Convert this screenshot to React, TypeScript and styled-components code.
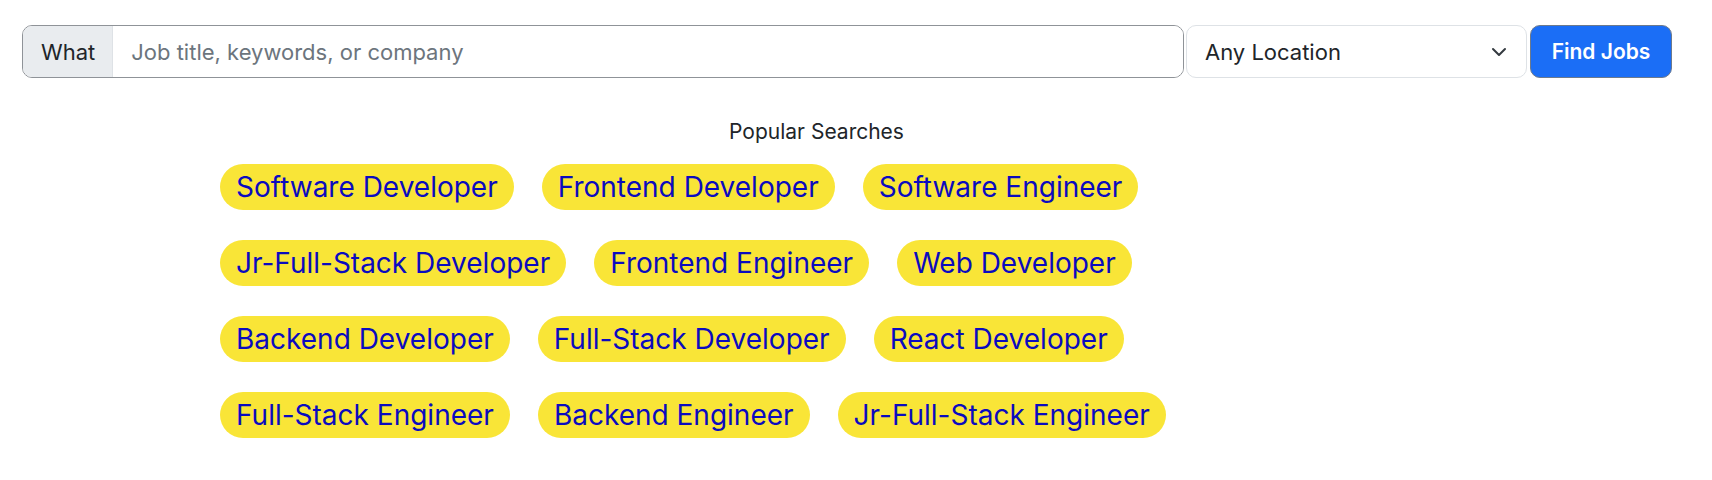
import React from 'react';
import styled, { createGlobalStyle } from 'styled-components';

const GlobalStyle = createGlobalStyle`
  body {
    margin: 0;
    background: #ffffff;
    font-family: Inter, "Liberation Sans", sans-serif;
    color: #212529;
  }
`;

const Page = styled.div`
  padding: 25px 40px 0 22px;
`;

const SearchBar = styled.form`
  display: flex;
  align-items: stretch;
  gap: 2px;
  height: 53px;
`;

const InputGroup = styled.div`
  flex: 1;
  display: flex;
  border: 1px solid #8f9398;
  border-radius: 10px;
  overflow: hidden;
`;

const GroupLabel = styled.span`
  display: flex;
  align-items: center;
  padding: 0 17px 0 18px;
  background: #e9ecef;
  border-right: 1px solid #dee2e6;
  font-size: 22px;
  color: #212529;
`;

const TextInput = styled.input`
  flex: 1;
  border: none;
  outline: none;
  padding: 0 18px;
  font-family: inherit;
  font-size: 22px;
  color: #212529;
  &::placeholder {
    color: #6c757d;
  }
`;

const SelectBox = styled.div`
  width: 341px;
  display: flex;
  align-items: center;
  padding: 0 18px;
  box-sizing: border-box;
  border: 1px solid #dee2e6;
  border-radius: 10px;
  font-size: 22px;
  color: #212529;
`;

const Chevron = styled.svg`
  margin-left: auto;
  margin-right: 1px;
`;

const FindButton = styled.button`
  width: 142px;
  margin-left: 1px;
  border: 1px solid #6d7a8c;
  border-radius: 10px;
  background: #1b6ef6;
  color: #ffffff;
  font-family: inherit;
  font-size: 21px;
  font-weight: 600;
  cursor: pointer;
`;

const Popular = styled.section`
  width: 1193px;
  margin: 38px 0 0 198px;
`;

const Heading = styled.div`
  text-align: center;
  font-size: 21px;
  line-height: 31px;
  color: #212529;
  margin-bottom: 17px;
`;

const ChipList = styled.div`
  display: flex;
  flex-wrap: wrap;
  column-gap: 28px;
  row-gap: 30px;
`;

const Chip = styled.a`
  display: inline-block;
  padding: 6px 16px;
  line-height: 34px;
  font-size: 28px;
  color: #0b0bbf;
  background: #f9e537;
  border-radius: 23px;
  text-decoration: none;
`;

const searches = [
  'Software Developer',
  'Frontend Developer',
  'Software Engineer',
  'Jr-Full-Stack Developer',
  'Frontend Engineer',
  'Web Developer',
  'Backend Developer',
  'Full-Stack Developer',
  'React Developer',
  'Full-Stack Engineer',
  'Backend Engineer',
  'Jr-Full-Stack Engineer',
];

const App = (): JSX.Element => {
  return (
    <Page>
      <GlobalStyle />
      <SearchBar onSubmit={(e) => e.preventDefault()}>
        <InputGroup>
          <GroupLabel>What</GroupLabel>
          <TextInput placeholder="Job title, keywords, or company" />
        </InputGroup>
        <SelectBox>
          Any Location
          <Chevron width="16" height="16" viewBox="0 0 16 16" fill="none">
            <path
              d="M2 5l6 6 6-6"
              stroke="#343a40"
              strokeWidth="2"
              strokeLinecap="round"
              strokeLinejoin="round"
            />
          </Chevron>
        </SelectBox>
        <FindButton type="submit">Find Jobs</FindButton>
      </SearchBar>
      <Popular>
        <Heading>Popular Searches</Heading>
        <ChipList>
          {searches.map((s) => (
            <Chip key={s} href="#">
              {s}
            </Chip>
          ))}
        </ChipList>
      </Popular>
    </Page>
  );
};

export default App;
